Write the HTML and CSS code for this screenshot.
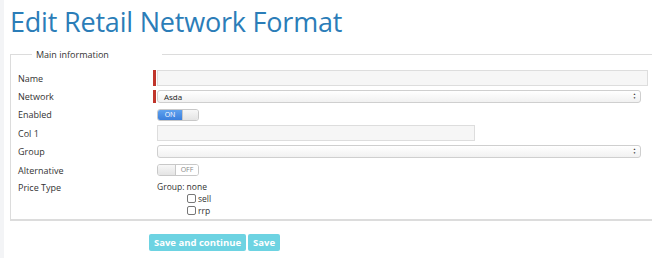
FILE: index.html
```html
<!DOCTYPE html>
<html lang="en">
<head>
    <meta charset="UTF-8">
    <title>Edit Retail Network Format</title>
    <link rel="stylesheet" href="styles.css">
</head>
<body>
<div class="page">
    <h1>Edit Retail Network Format</h1>

    <form class="edit-form">
        <fieldset>
            <legend>Main information</legend>

            <div class="row">
                <label>Name</label>
                <div class="required">
                    <input type="text" class="text wide">
                </div>
            </div>

            <div class="row">
                <label>Network</label>
                <div class="required">
                    <div class="select">Asda<span class="arrows">&#9650;<br>&#9660;</span></div>
                </div>
            </div>

            <div class="row">
                <label>Enabled</label>
                <div class="toggle on"><span class="left">ON</span><span class="right"></span></div>
            </div>

            <div class="row">
                <label>Col 1</label>
                <input type="text" class="text short">
            </div>

            <div class="row">
                <label>Group</label>
                <div class="select"><span class="arrows">&#9650;<br>&#9660;</span></div>
            </div>

            <div class="row">
                <label>Alternative</label>
                <div class="toggle off"><span class="left"></span><span class="right">OFF</span></div>
            </div>

            <div class="row price">
                <label>Price Type</label>
                <div class="group">
                    <div>Group: none</div>
                    <div class="check"><span class="box"></span>sell</div>
                    <div class="check"><span class="box"></span>rrp</div>
                </div>
            </div>
        </fieldset>

        <div class="actions">
            <button type="button">Save and continue</button>
            <button type="button">Save</button>
        </div>
    </form>
</div>
</body>
</html>
```

FILE: styles.css
```css
body {
    margin: 0;
    background: #ffffff;
    color: #333333;
    font-family: 'Open Sans', sans-serif;
}

.page {
    border-left: 4px solid #f3f4f6;
    padding-left: 6px;
    min-height: 258px;
    box-sizing: border-box;
    overflow: hidden;
}

h1 {
    margin: 0;
    padding-top: 3px;
    height: 45px;
    font-size: 27px;
    font-weight: normal;
    color: #2b7db8;
    letter-spacing: -0.2px;
}

fieldset {
    margin: 0 -10px 0 0;
    padding: 8px 0 0 7px;
    border: 1px solid #dcdcdc;
    border-bottom-width: 2px;
    border-right: none;
}

legend {
    width: 122px;
    padding: 0 4px;
    margin-left: 14px;
    font-size: 9px;
}

.row {
    display: flex;
    align-items: center;
    height: 18.4px;
    font-size: 9px;
}

.row label {
    width: 139px;
    flex: none;
}

.required {
    border-left: 3px solid #c0352b;
    padding-left: 1px;
    margin-left: -4px;
    display: flex;
    align-items: center;
}

.text {
    box-sizing: border-box;
    height: 16px;
    margin: 0;
    border: 1px solid #dddddd;
    background: #f6f6f6;
}

.text.wide {
    width: 491px;
}

.text.short {
    width: 318px;
}

.select {
    position: relative;
    box-sizing: border-box;
    width: 484px;
    height: 13px;
    line-height: 11px;
    padding-left: 6px;
    border: 1px solid #cfcfcf;
    border-radius: 3px;
    background: linear-gradient(#ffffff, #f1f1f1);
    font-size: 8px;
    color: #222222;
}

.arrows {
    position: absolute;
    right: 4px;
    top: 2px;
    font-size: 3px;
    line-height: 3.5px;
    color: #333333;
}

.toggle {
    display: flex;
    width: 42px;
    height: 12px;
    box-sizing: border-box;
    border: 1px solid #c8c8c8;
    border-radius: 3px;
    overflow: hidden;
    font-size: 7px;
    line-height: 10px;
}

.toggle span {
    display: block;
    text-align: center;
}

.toggle.on .left {
    width: 24px;
    background: linear-gradient(#5fa1ee, #3b7fdd);
    color: #ffffff;
}

.toggle.on .right {
    flex: 1;
    background: linear-gradient(#f7f7f7, #e4e4e4);
    border-left: 1px solid #c8c8c8;
}

.toggle.off .left {
    width: 17px;
    background: linear-gradient(#f7f7f7, #e4e4e4);
    border-right: 1px solid #c8c8c8;
}

.toggle.off .right {
    flex: 1;
    background: #ffffff;
    color: #888888;
}

.price {
    align-items: flex-start;
    height: 38px;
    padding-top: 2px;
}

.group {
    font-size: 8.5px;
    line-height: 11.7px;
}

.check {
    display: flex;
    align-items: center;
    margin-left: 30px;
}

.box {
    width: 7px;
    height: 7px;
    border: 1px solid #777777;
    border-radius: 2px;
    margin-right: 2px;
}

.actions {
    padding: 13px 0 0 139px;
    display: flex;
    gap: 2px;
}

.actions button {
    height: 17px;
    padding: 0 5px;
    border: none;
    border-radius: 2px;
    background: #6dd3e2;
    color: #ffffff;
    font-family: 'Open Sans', sans-serif;
    font-weight: bold;
    font-size: 9.5px;
    cursor: pointer;
}
```
